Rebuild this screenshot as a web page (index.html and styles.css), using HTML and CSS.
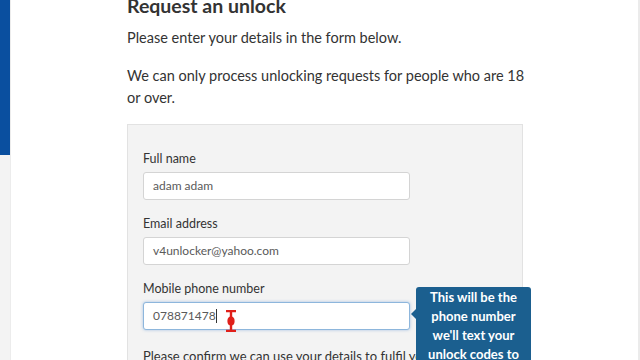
FILE: index.html
```html
<!DOCTYPE html>
<html lang="en">
<head>
  <meta charset="UTF-8">
  <title>Request an unlock</title>
  <link rel="stylesheet" href="styles.css">
</head>
<body>
  <div class="page">
    <div class="side">
      <div class="side-top"></div>
      <div class="side-rest"></div>
    </div>
    <div class="main">
      <h1 class="title">Request an unlock</h1>
      <p class="intro">Please enter your details in the form below.</p>
      <p class="intro last">We can only process unlocking requests for people who are 18 or over.</p>

      <div class="panel">
        <div class="field">
          <label class="label">Full name</label>
          <div class="input">adam adam</div>
        </div>
        <div class="field">
          <label class="label">Email address</label>
          <div class="input">v4unlocker@yahoo.com</div>
        </div>
        <div class="field">
          <label class="label">Mobile phone number</label>
          <div class="input focus">078871478<span class="caret"></span></div>
          <svg class="ibeam" width="12" height="22" viewBox="0 0 12 22">
            <path d="M1 1h10M1 21h10M6 1v20" stroke="#e0201a" stroke-width="2.4" fill="none"/>
            <ellipse cx="6" cy="11" rx="3.6" ry="4.5" fill="#e0201a"/>
          </svg>
          <div class="tip">This will be the phone number we'll text your unlock codes to</div>
        </div>
        <p class="confirm">Please confirm we can use your details to fulfil your request</p>
      </div>
    </div>
    <div class="edge"></div>
  </div>
</body>
</html>
```

FILE: styles.css
```css
* {
  margin: 0;
  padding: 0;
  box-sizing: border-box;
}
html, body {
  height: 100%;
  overflow: hidden;
}
body {
  background: #fff;
  font-family: Lato, "Open Sans", "Liberation Sans", sans-serif;
  color: #333;
}
.page {
  display: flex;
  height: 360px;
}
.side {
  width: 11px;
  display: flex;
  flex-direction: column;
  border-right: 1px solid #ececec;
}
.side-top {
  height: 155px;
  background: #0a4f9f;
}
.side-rest {
  flex: 1;
  background: #f3f3f3;
}
.main {
  flex: 1;
  padding-left: 116px;
  margin-top: -10px;
}
.title {
  font-size: 19.5px;
  font-weight: 700;
  color: #333;
  line-height: 28px;
  padding-top: 2px;
  margin-bottom: 7px;
}
.intro {
  font-size: 14.5px;
  line-height: 22px;
  width: 400px;
  margin-bottom: 16px;
}
.intro.last {
  margin-bottom: 15px;
}
.panel {
  width: 396px;
  background: #f3f3f3;
  border: 1px solid #e2e2e2;
  border-bottom: none;
  padding: 24px 112px 0 15px;
  height: 400px;
}
.field {
  position: relative;
  margin-bottom: 14px;
}
.label {
  display: block;
  font-size: 12.5px;
  line-height: 20px;
  margin-bottom: 3px;
}
.input {
  height: 28px;
  background: #fff;
  border: 1px solid #d4d4d4;
  border-radius: 3px;
  font-size: 12px;
  line-height: 26px;
  padding-left: 9px;
  color: #5a5a5a;
}
.input.focus {
  border-color: #8db6dc;
  box-shadow: 0 0 3px rgba(80, 140, 210, 0.5);
}
.caret {
  display: inline-block;
  width: 1px;
  height: 14px;
  background: #333;
  vertical-align: -3px;
}
.ibeam {
  position: absolute;
  left: 82px;
  top: 31px;
}
.tip {
  position: absolute;
  left: 273px;
  top: 8px;
  width: 115px;
  background: #1b5f8f;
  color: #fff;
  font-size: 13px;
  font-weight: 700;
  line-height: 19px;
  text-align: center;
  padding: 1px 6px 10px;
  border-radius: 3px;
}
.tip::before {
  content: "";
  position: absolute;
  left: -5px;
  top: 22px;
  border-top: 5px solid transparent;
  border-bottom: 5px solid transparent;
  border-right: 5px solid #1b5f8f;
}
.confirm {
  font-size: 13px;
  line-height: 20px;
  white-space: nowrap;
  margin-top: 16px;
}
.edge {
  width: 2px;
  background: #ebebeb;
}
```
